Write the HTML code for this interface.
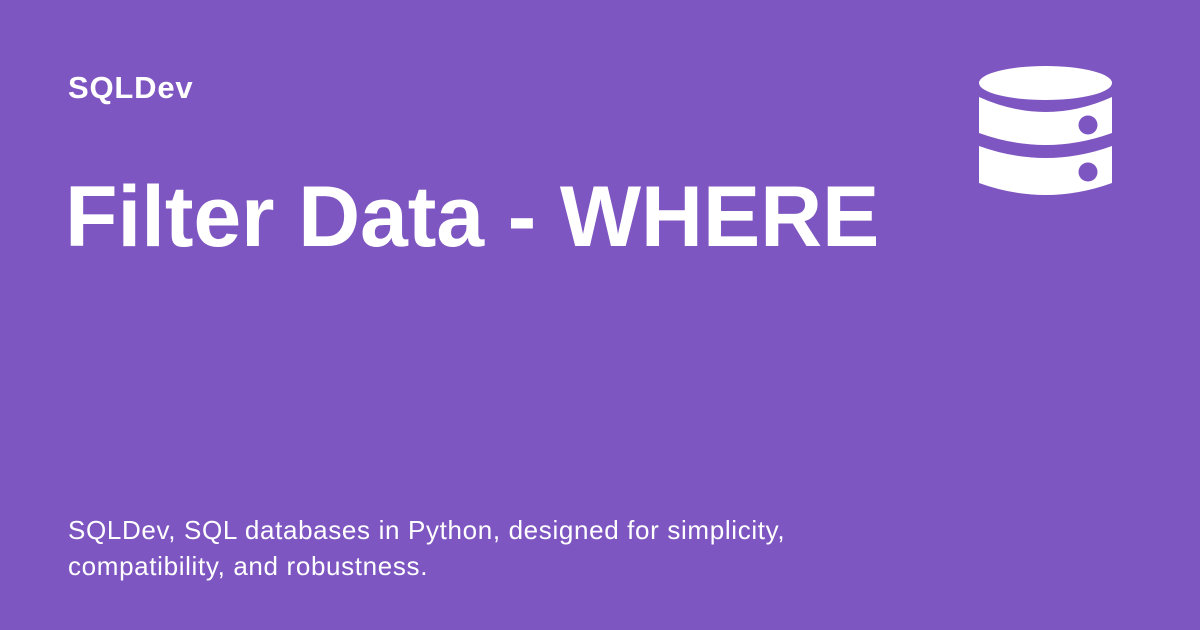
<!DOCTYPE html>
<html><head><style>
html,body{margin:0;padding:0}
body{width:1200px;height:630px;background:#7e56c1;position:relative;overflow:hidden;font-family:"Liberation Sans",sans-serif;color:#fff}
.site{position:absolute;left:68px;top:70px;font-size:31px;font-weight:bold;letter-spacing:0.8px}
.title{position:absolute;left:65px;top:168px;font-size:86px;font-weight:bold;letter-spacing:-0.15px}
.desc{position:absolute;left:68px;top:512px;font-size:26px;line-height:36px;letter-spacing:0.65px}
svg{position:absolute;left:0;top:0}
</style></head><body>
<div class="site">SQLDev</div>
<div class="title">Filter Data - WHERE</div>
<div class="desc">SQLDev, SQL databases in Python, designed for simplicity,<br>compatibility, and robustness.</div>
<svg width="1200" height="630">
<ellipse cx="1045.5" cy="83" rx="66.5" ry="17" fill="#fff"/>
<path d="M979 97 Q1045.5 127 1112 97 L1112 133 Q1045.5 157 979 133 Z" fill="#fff"/>
<path d="M979 146 Q1045.5 170 1112 146 L1112 183 Q1045.5 207 979 183 Z" fill="#fff"/>
<circle cx="1088" cy="125" r="9.5" fill="#7e56c1"/>
<circle cx="1088" cy="172" r="9.5" fill="#7e56c1"/>
</svg>
</body></html>
